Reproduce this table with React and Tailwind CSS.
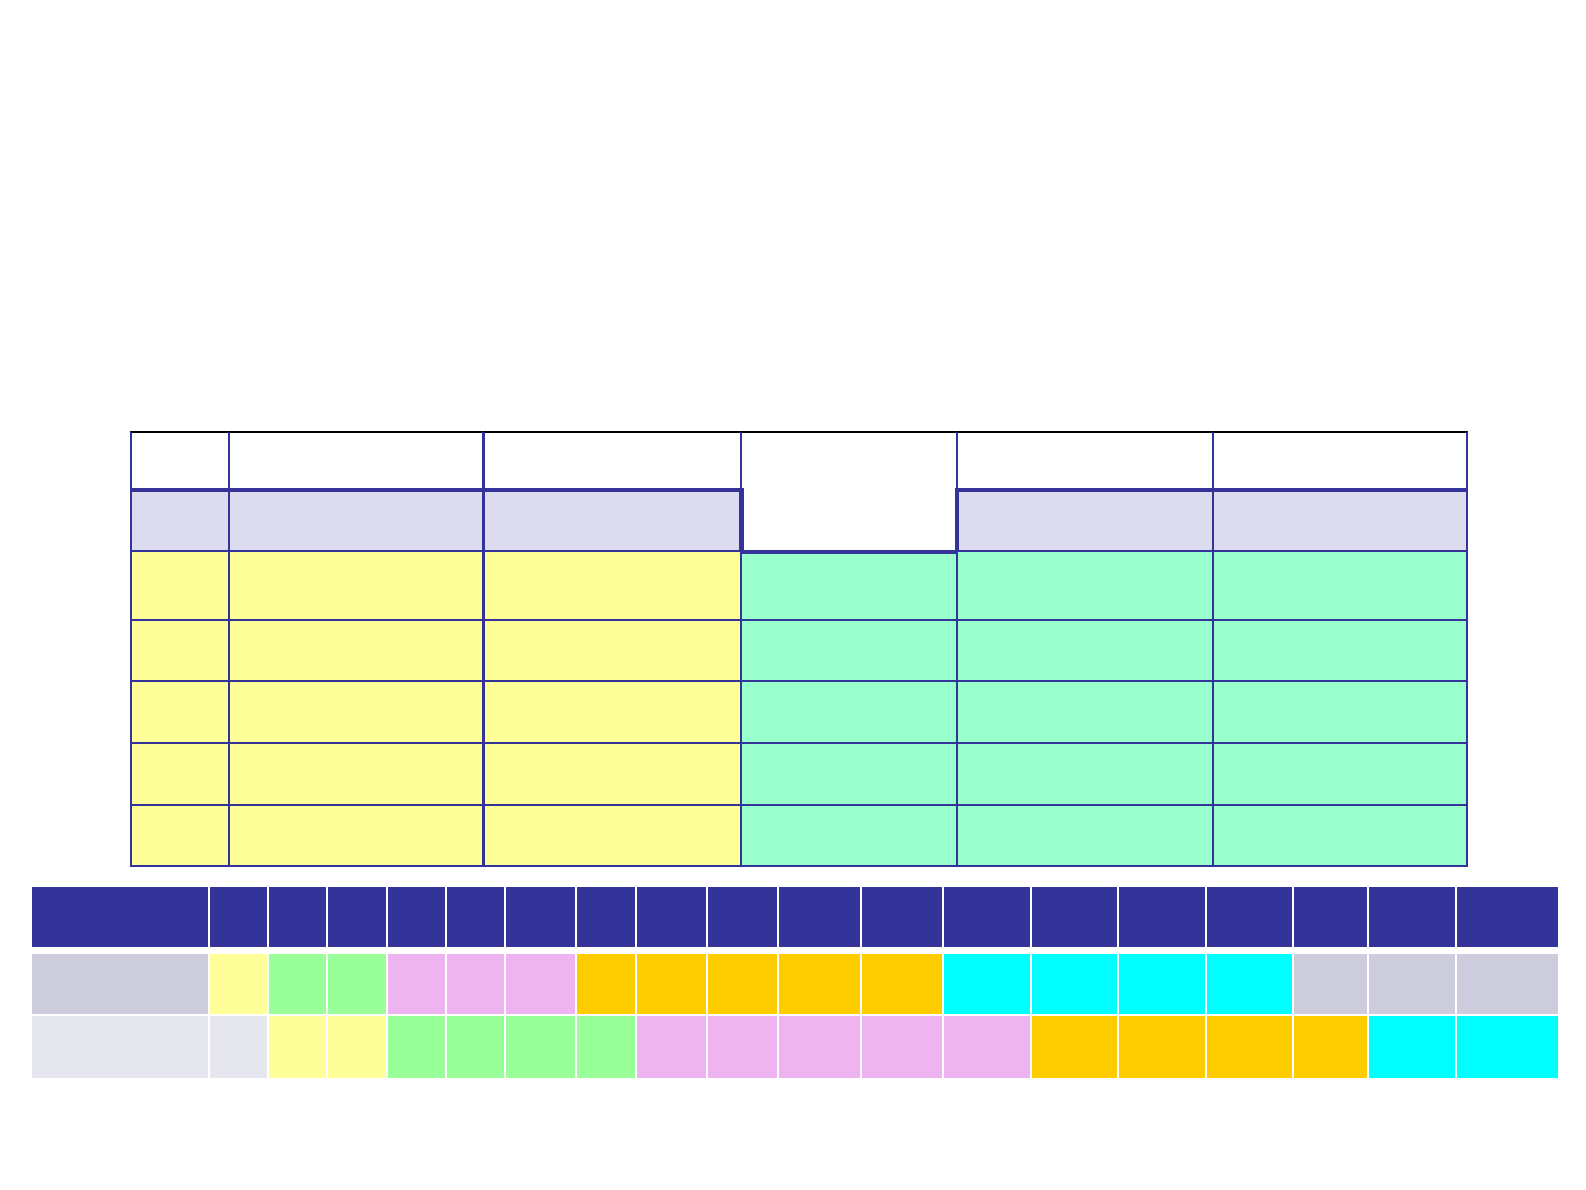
import React from "react";

const topCells = [
  // row 1
  "bg-white border-t-2 border-t-black border-l-2 border-l-[#333399]",
  "bg-white border-t-2 border-t-black border-l-2 border-l-[#333399]",
  "bg-white border-t-2 border-t-black border-l-[3px] border-l-[#333399]",
  "bg-white border-t-2 border-t-black border-l-2 border-l-[#333399]",
  "bg-white border-t-2 border-t-black border-l-2 border-l-[#333399]",
  "bg-white border-t-2 border-t-black border-l-2 border-l-[#333399] border-r-2 border-r-[#333399]",
  // row 2
  "bg-[#dcdcee] border-t-4 border-t-[#333399] border-l-2 border-l-[#333399]",
  "bg-[#dcdcee] border-t-4 border-t-[#333399] border-l-2 border-l-[#333399]",
  "bg-[#dcdcee] border-t-4 border-t-[#333399] border-l-[3px] border-l-[#333399] border-r border-r-[#333399]",
  "bg-white border-l-4 border-l-[#333399] border-r border-r-[#333399]",
  "bg-[#dcdcee] border-t-4 border-t-[#333399] border-l-[3px] border-l-[#333399]",
  "bg-[#dcdcee] border-t-4 border-t-[#333399] border-l-2 border-l-[#333399] border-r-2 border-r-[#333399]",
];

const yellow = "bg-[#ffff99]";
const mint = "bg-[#99ffcc]";

function bodyRow(first, last) {
  const bb = last ? " border-b-2 border-b-[#333399]" : "";
  return [
    `${yellow} border-t-2 border-t-[#333399] border-l-2 border-l-[#333399]${bb}`,
    `${yellow} border-t-2 border-t-[#333399] border-l-2 border-l-[#333399]${bb}`,
    `${yellow} border-t-2 border-t-[#333399] border-l-[3px] border-l-[#333399]${bb}`,
    first
      ? `${mint} border-t-4 border-t-[#333399] border-l-2 border-l-[#333399]${bb}`
      : `${mint} border-t-2 border-t-[#333399] border-l-2 border-l-[#333399]${bb}`,
    `${mint} border-t-2 border-t-[#333399] border-l-2 border-l-[#333399]${bb}`,
    `${mint} border-t-2 border-t-[#333399] border-l-2 border-l-[#333399] border-r-2 border-r-[#333399]${bb}`,
  ];
}

const allTop = [
  ...topCells,
  ...bodyRow(true, false),
  ...bodyRow(false, false),
  ...bodyRow(false, false),
  ...bodyRow(false, false),
  ...bodyRow(false, true),
];

const H = "bg-[#333399]";
const Y = "bg-[#ffff99]";
const G = "bg-[#99ff99]";
const P = "bg-[#eeb4f0]";
const O = "bg-[#ffcc00]";
const C = "bg-[#00ffff]";
const L = "bg-[#ccccdd]";
const E = "bg-[#e6e6ee]";

const header = Array(19).fill(H);
const row2 = [L, Y, G, G, P, P, P, O, O, O, O, O, C, C, C, C, L, L, L];
const row3 = [E, E, Y, Y, G, G, G, G, P, P, P, P, P, O, O, O, O, C, C];

const COLS =
  "grid grid-cols-[176px_57px_57px_58px_57px_57px_69px_58px_69px_69px_81px_80px_86px_85px_86px_85px_73px_86px_101px] gap-x-[2px]";

function Strip({ cells, h }) {
  return (
    <div className={COLS}>
      {cells.map((c, i) => (
        <div key={i} className={`${c} ${h}`} />
      ))}
    </div>
  );
}

export default function App() {
  return (
    <div
      className="w-[1586px] h-[1190px] bg-white flex flex-col"
      style={{ fontFamily: '"Liberation Sans", Arial, sans-serif' }}
    >
      <div className="pt-[431px] pl-[130px]">
        <div className="grid grid-cols-[98px_254px_258px_216px_256px_256px] grid-rows-[57px_62px_69px_61px_62px_62px_63px]">
          {allTop.map((c, i) => (
            <div key={i} className={c} />
          ))}
        </div>
      </div>
      <div className="pt-[20px] pl-[32px] flex flex-col">
        <Strip cells={header} h="h-[60px]" />
        <div className="mt-[7px]">
          <Strip cells={row2} h="h-[60px]" />
        </div>
        <div className="mt-[2px]">
          <Strip cells={row3} h="h-[62px]" />
        </div>
      </div>
    </div>
  );
}
